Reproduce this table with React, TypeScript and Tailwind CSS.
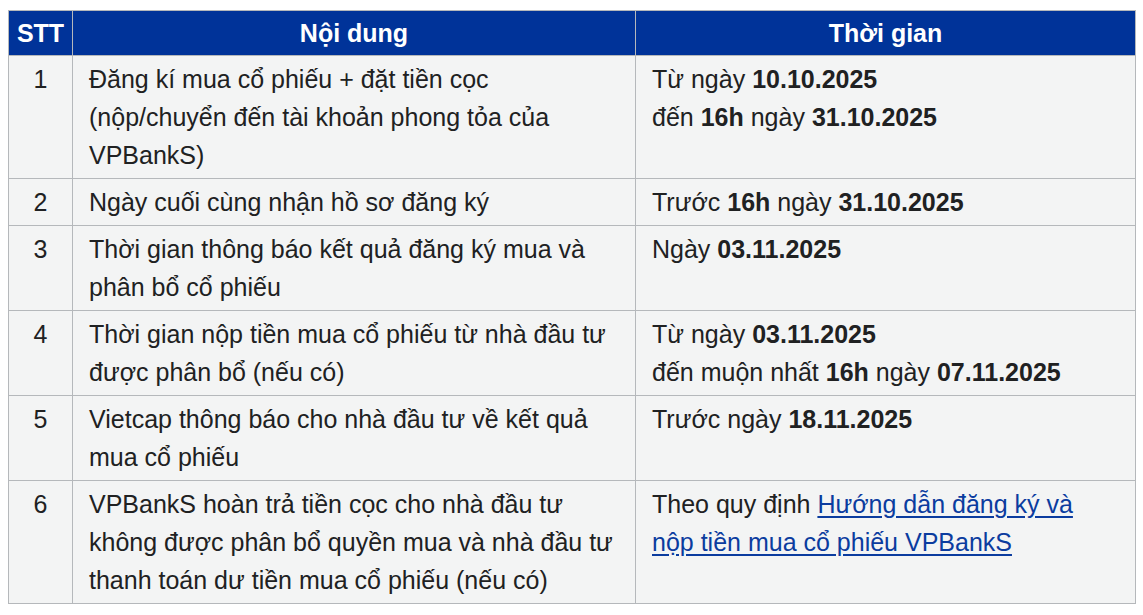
type Row = {
    stt: number;
    content: string;
    time: React.ReactNode;
};

const rows: Row[] = [
    {
        stt: 1,
        content: "Đăng kí mua cổ phiếu + đặt tiền cọc (nộp/chuyển đến tài khoản phong tỏa của VPBankS)",
        time: (
            <>
                Từ ngày <b>10.10.2025</b>
                <br />
                đến <b>16h</b> ngày <b>31.10.2025</b>
            </>
        ),
    },
    {
        stt: 2,
        content: "Ngày cuối cùng nhận hồ sơ đăng ký",
        time: (
            <>
                Trước <b>16h</b> ngày <b>31.10.2025</b>
            </>
        ),
    },
    {
        stt: 3,
        content: "Thời gian thông báo kết quả đăng ký mua và phân bổ cổ phiếu",
        time: (
            <>
                Ngày <b>03.11.2025</b>
            </>
        ),
    },
    {
        stt: 4,
        content: "Thời gian nộp tiền mua cổ phiếu từ nhà đầu tư được phân bổ (nếu có)",
        time: (
            <>
                Từ ngày <b>03.11.2025</b>
                <br />
                đến muộn nhất <b>16h</b> ngày <b>07.11.2025</b>
            </>
        ),
    },
    {
        stt: 5,
        content: "Vietcap thông báo cho nhà đầu tư về kết quả mua cổ phiếu",
        time: (
            <>
                Trước ngày <b>18.11.2025</b>
            </>
        ),
    },
    {
        stt: 6,
        content:
            "VPBankS hoàn trả tiền cọc cho nhà đầu tư không được phân bổ quyền mua và nhà đầu tư thanh toán dư tiền mua cổ phiếu (nếu có)",
        time: (
            <>
                Theo quy định{" "}
                <a href="#" className="text-[#0b3c9f] underline underline-offset-[3px]">
                    Hướng dẫn đăng ký và nộp tiền mua cổ phiếu VPBankS
                </a>
            </>
        ),
    },
];

export default function App() {
    return (
        <div className="min-h-screen bg-white pl-2 pt-[10px] font-['Liberation_Sans',Arial,sans-serif] text-[25px] leading-[38px] text-[#202122]">
            <table className="w-[1127px] table-fixed border-collapse">
                <colgroup>
                    <col className="w-[64px]" />
                    <col className="w-[563px]" />
                    <col className="w-[500px]" />
                </colgroup>
                <thead>
                    <tr className="bg-[#003399] text-white">
                        <th className="border border-[#b5b8bb] py-[3px] text-center font-bold">STT</th>
                        <th className="border border-[#b5b8bb] py-[3px] text-center font-bold">Nội dung</th>
                        <th className="border border-[#b5b8bb] py-[3px] text-center font-bold">Thời gian</th>
                    </tr>
                </thead>
                <tbody>
                    {rows.map((row) => (
                        <tr key={row.stt} className="bg-[#f3f4f4] align-top">
                            <td className="border border-[#b5b8bb] py-1 text-center">{row.stt}</td>
                            <td className="border border-[#b5b8bb] py-1 pl-4 pr-3">{row.content}</td>
                            <td className="border border-[#b5b8bb] py-1 pl-4 pr-8">{row.time}</td>
                        </tr>
                    ))}
                </tbody>
            </table>
        </div>
    );
}
